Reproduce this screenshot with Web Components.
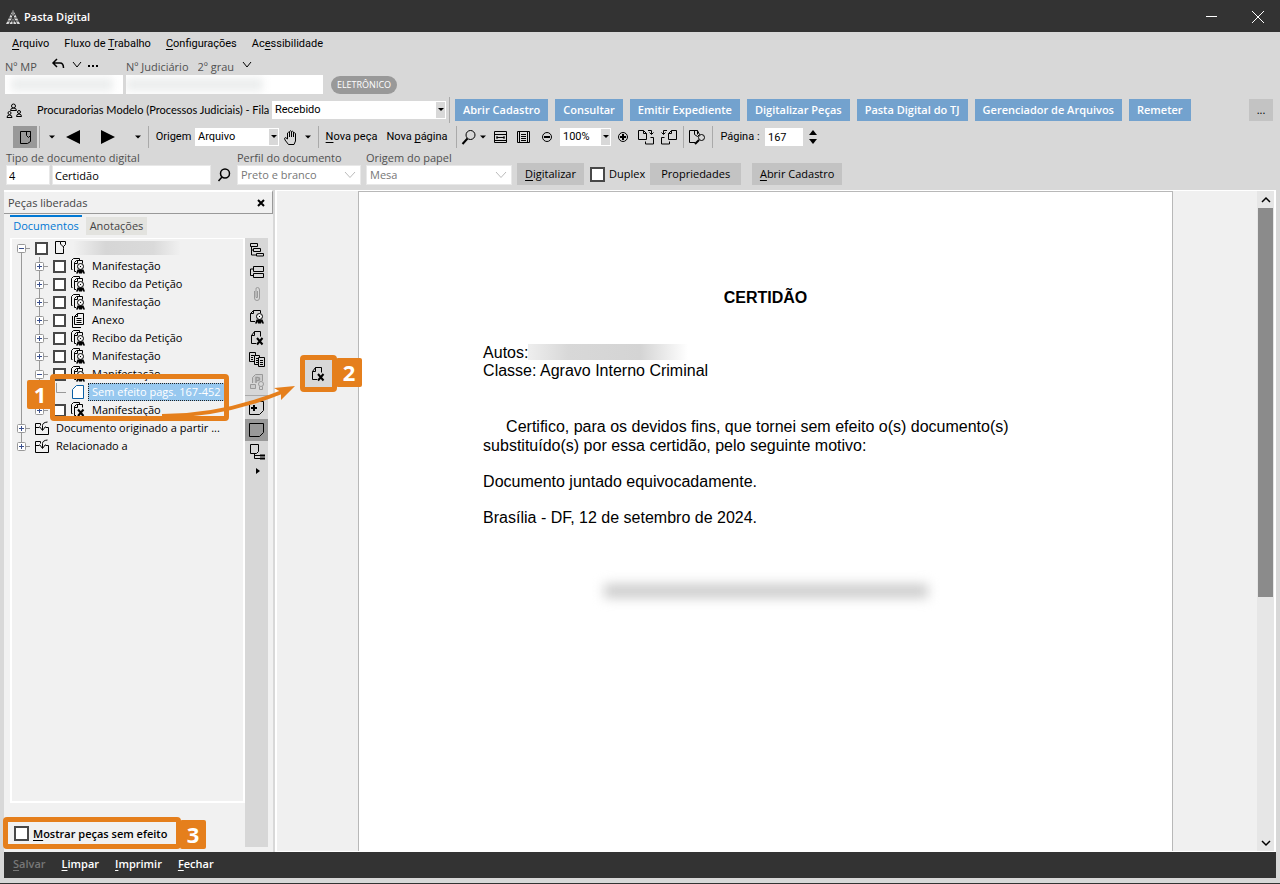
<!DOCTYPE html>
<html lang="pt-BR">
<head>
<meta charset="utf-8">
<title>Pasta Digital</title>
<style>
html, body { margin: 0; height: 100%; }
body { background: #d8d8d8; color: #000; font: 11px/16px "Open Sans", "Noto Sans", sans-serif; }
</style>
</head>
<body>
<app-window></app-window>
<script>
const base = `<style>
*, *::before { box-sizing: border-box; }
button, input, select { font: inherit; color: inherit; border: 0; border-radius: 0; margin: 0; padding: 0; background: none; }
button { white-space: nowrap; }
svg { display: block; flex: none; overflow: visible; }
label, span { white-space: nowrap; }
u { text-underline-offset: 2px; }
input[type=checkbox] { appearance: none; flex: none; width: 15px; height: 15px; border: 2px solid #484848; background: #fff; }
input[type=text] { background: #fff; min-width: 0; }
select { appearance: none; width: 100%; }
</style>`;

const rosette = '<circle cx="10.500" cy="8.500" r="3" fill="#f1f1f1"/><path d="M10 8.500h1"/><path d="M7.500 11.500h6l1.500 4h-2l-1-2v2H9v-2l-1 2H6z" fill="#000" stroke="none"/>';
const pages = '<path d="M6 13.500H4.500V4.500L6.500 2.500h6v3M2.500 11.500h-1v-9L3.500 .500h6v2M7.500 3v2.500H5"/>';
const art = {
  page: '<path d="M3.500 2.500h10v10l-3 2h-7z"/><path d="M9.500 2.500v4l2 2 2-2v-4"/>',
  root: '<path d="M8.500 1.500h5v3l-2 2v2M8.500 1.500v2.500l3 3M8.500 1.500h-5v12h8v-5"/>',
  cert: pages + rosette,
  annex: '<path d="M4.500 4.500l3-3h6v11h-9zM2.500 4v11.500H11M7.500 1.500v3h-3M6.500 6.500h5M6.500 8.500h5M6.500 10.500h5"/>',
  voided: pages + '<path d="M8 7.500l5.500 6.500M13.500 7.500L8 14" stroke-width="2"/>',
  sheet: '<path d="M2.500 5.500l4-4h7v13h-11z" stroke="#0a5fa5" fill="#fff"/>',
  folder: '<path d="M1.500 14.500v-11h5v2M1.500 7.500h4M11.500 7.500h3v7h-13M5.500 6.500l3 4 3-4M8.500 10V5.500q0-3 5-3.500"/>',
  tree: '<path d="M1.500 1.500h7v3h-7zM4.500 6.500h7v3h-7zM7.500 11.500h7v2.500h-7zM2.500 4.500v8.500h5M2.500 8h2"/>',
  split: '<path d="M4.500 2.500h10v5h-10zM4.500 9.500h10v4h-10zM4.500 5h-3v6.500h3"/>',
  clip: '<path d="M5.500 5v7q0 2.500 2.500 2.500t2.500-2.500V4q0-2.500-2-2.500t-1.500 2v8h1.500V5" stroke="#999"/>',
  certPage: '<path d="M6 13.500H1.500V5.500l3-3h7V5M4.500 2.500v3h-3"/>' + rosette,
  voidPage: '<path d="M7 13.500H2.500V5.500l3-4h6v5M5.500 1.500v4h-3"/><path d="M8 8l5.500 6.500M13.500 8L8 14.500" stroke-width="2"/>',
  copies: '<g fill="#d8d8d8"><path d="M.500 .500h6v9h-6z"/><path d="M5.500 3.500h5v9h-5z"/><path d="M9.500 5.500h6v9h-6z"/></g><path d="M2 3.500h3M2 5.500h2M2 7.500h2M7 6.500h2M7 8.500h2M7 10.500h2M11 8.500h3M11 10.500h3M11 12.500h3"/>',
  stamp: '<g stroke="#999"><path d="M3.500 9V3.500l3-3h7V7M1.500 10.500h5v4h-5z" fill="#ccc"/><path d="M7 9V3.500h1.500q2 0 2 1.500t-2 1.500H7" stroke-width="1.500"/><circle cx="12" cy="10" r="2.500" fill="#d8d8d8"/><path d="M10.500 12.500v3h3v-3"/></g>',
  addPage: '<path d="M.500 1.500h14v9l-4 4H.500z"/><path d="M2 8h6M5 5v6" stroke-width="2"/>',
  bigPage: '<path d="M.500 1.500h14v9l-4 4h-10z"/>',
  map: '<path d="M1.500 .500h8v7l-2 2h-6zM5.500 10v4.500H11M5.500 11.500H11"/><path d="M11 11.500h5M11 14.500h5" stroke-width="2"/>',
  org: '<circle cx="7.500" cy="4" r="2"/><path d="M4.500 8.500q0-2.500 3-2.500t3 2.500z"/><circle cx="3.500" cy="11" r="1.500"/><path d="M1 15.500q0-2.500 2.500-2.500T6 15.500z"/><circle cx="13" cy="10" r="1.500"/><path d="M10.500 14.500q0-2.500 2.500-2.500t2.500 2.500z"/>',
  hand: '<path d="M5.500 15.500L2 11Q1 8.500 2.500 8.500L4.500 10V4q1-1.500 2 0v4V2.500q1-1.500 2 0V8 3q1-1.500 2 0v5V4.500q1-1.500 2 0V12l-1.500 3.500z"/>',
  zoom: '<circle cx="9.500" cy="6" r="4.500"/><path d="M6.500 9.500L1.500 15" stroke-width="2"/>',
  find: '<circle cx="9" cy="6.500" r="4.500" stroke-width="1.500"/><path d="M6 10L2.500 14" stroke-width="1.500"/>',
  fitW: '<path d="M2.500 2.500h12v11h-12zM2.500 5.500h12M2.500 11.500h12M4.500 8.500h8M5 7v3M12 7v3"/>',
  fitP: '<path d="M1.500 2.500h12v11h-12zM3.500 2.500v11M11.500 2.500v11M5 5.500h5M5 7.500h5M5 9.500h5M5 11.500h5"/>',
  minus: '<circle cx="8" cy="8" r="4.500"/><path d="M5 8h6" stroke-width="2"/>',
  plus: '<circle cx="8" cy="8" r="4.500"/><path d="M5 8h6M8 5v6" stroke-width="2"/>',
  rotR: '<path d="M.500 1.500h5l3 3v6h-8zM5.500 1.500v3h3M10 1.500h3.500V5M11.500 3.500l2 2 2-2M7.500 12.500v2.500h8V8.500h-3"/>',
  rotL: '<path d="M15.500 1.500h-5l-3 3v6h8zM10.500 1.500v3h-3M6 1.500H2.500V5M.500 3.500l2 2 2-2M8.500 12.500v2.500h-8V8.500h3"/>',
  inspect: '<path d="M6 13.500H.500v-12h8v4M5.500 1.500v4l3 2 2-2-2-4"/><circle cx="12.500" cy="8.500" r="3"/><path d="M10 11l-4 4" stroke-width="2"/>',
  left: '<path d="M15 1v14L1 8z" fill="#000" stroke="none"/>',
  right: '<path d="M1 1v14L15 8z" fill="#000" stroke="none"/>',
  caret: '<path d="M5 6.500h6L8 9.500z" fill="#000" stroke="none"/>',
  caretR: '<path d="M7 5v6l4-3z" fill="#000" stroke="none"/>',
  chev: '<path d="M4 5l4 5 4-5"/>',
  reply: '<path d="M7 2L3 6l4 4M3 6h7q3.500 0 3.500 5" stroke-width="1.500"/>',
  close: '<path d="M5 5l6 6M11 5l-6 6" stroke-width="2"/>',
  up: '<path d="M4 10l4-4 4 4" stroke-width="1.500"/>',
  down: '<path d="M4 6l4 4 4-4" stroke-width="1.500"/>'
};
const icon = (n, w = 16) => `<svg width="${w}" height="16" viewBox="0 0 ${w} 16" fill="none" stroke="#000" aria-hidden="true">${art[n]}</svg>`;

function define(name, html) {
  const t = document.createElement('template');
  t.innerHTML = base + html;
  customElements.define(name, class extends HTMLElement {
    constructor() {
      super();
      this.attachShadow({ mode: 'open' }).append(t.content.cloneNode(true));
    }
  });
}

define('title-bar', `<style>
:host { display: flex; align-items: center; box-sizing: border-box; height: 32px; padding: 2px 10px 0 6px; gap: 4px; background: #333; color: #fff; font-weight: 600; }
h1 { flex: 1; margin: 0; font: inherit; }
button { width: 24px; height: 24px; margin-left: 18px; display: grid; place-items: center; }
</style>
<svg width="14" height="14" viewBox="0 0 14 14"><path d="M7 0L14 14H0z" fill="#ddd"/><path d="M5 4l6 10M9 4L3 14M3 8h8M1 11h12M7 1v13" stroke="#333"/></svg>
<h1>Pasta Digital</h1>
<button aria-label="Minimizar"><svg width="12" height="12"><path d="M0 5.500h11" stroke="#fff"/></svg></button>
<button aria-label="Fechar janela"><svg width="12" height="12"><path d="M0 0l12 12M12 0L0 12" stroke="#fff"/></svg></button>`);

define('menu-bar', `<style>
:host { display: flex; align-items: center; box-sizing: border-box; height: 22px; padding: 1px 0 0 12px; gap: 15px; font: 11px/16px Roboto, sans-serif; }
</style>
<button><u>A</u>rquivo</button><button>Fluxo de <u>T</u>rabalho</button><button><u>C</u>onfigurações</button><button>Ac<u>e</u>ssibilidade</button>`);

define('process-bar', `<style>
:host { display: grid; grid-template-columns: 118px 197px auto; justify-content: start; column-gap: 3px; padding: 4px 0 3px 5px; color: #505050; }
.lab { display: flex; align-items: center; height: 17px; }
.lab button { margin-left: 3px; }
.lab button:first-of-type { margin-left: 13px; }
.field { position: relative; height: 19px; overflow: hidden; }
.field input { width: 100%; height: 100%; display: block; }
.smear { position: absolute; inset: 3px 10px 3px 6px; background: #ebeded; filter: blur(4px); }
.field + .field .smear { right: 60px; left: 0; }
.grade { display: flex; align-items: center; margin-left: 9px; }
.grade select { width: 41px; }
.grade svg, .lab button svg { margin-top: -4px; }
.badge { align-self: center; margin-left: 5px; height: 18px; width: 66px; text-align: center; border-radius: 9px; background: #999; color: #fff; font: 9px/18px "Open Sans", sans-serif; }
</style>
<div class="lab"><label for="mp">Nº MP</label><button aria-label="Voltar">${icon('reply')}</button><button aria-label="Opções">${icon('chev')}</button>
<button aria-label="Mais"><svg width="12" height="16"><path d="M0 9h2m2 0h2m2 0h2" stroke="#000" stroke-width="2"/></svg></button></div>
<div class="lab"><label for="jud">Nº Judiciário</label><span class="grade"><select aria-label="Grau"><option>2º grau</option></select>${icon('chev')}</span></div><i></i>
<div class="field"><input type="text" id="mp"><div class="smear"></div></div>
<div class="field"><input type="text" id="jud"><div class="smear"></div></div>
<span class="badge">ELETRÔNICO</span>`);

define('combo-box', `<style>
:host { display: flex; align-items: center; box-sizing: border-box; position: relative; height: 18px; padding-left: 3px; background: #fff; }
::slotted(select) { opacity: 1; height: 100%; }
div { position: absolute; right: 1px; top: 1px; bottom: 1px; width: 9px; display: grid; place-items: center; background: #d8d8d8; pointer-events: none; }
:host([flat]) { color: #777; height: 20px; border: 1px solid #e8e8e8; }
:host([flat]) div { width: 18px; background: none; }
:host([flat]) .c, :host(:not([flat])) .f { display: none; }
</style>
<slot></slot><div><svg class="c" width="6" height="4"><path d="M0 0h6L3 3z"/></svg><svg class="f" width="12" height="7"><path d="M1 0l5 5.500L11 0" fill="none" stroke="#bbb"/></svg></div>`);

define('queue-bar', `<style>
:host { display: flex; align-items: center; height: 26px; padding: 0 7px 0 6px; font: 11px/16px Roboto, sans-serif; }
label { width: 235px; margin-left: 15px; font-family: Lato, sans-serif; }
combo-box { width: 174px; margin-right: 3px; }
i { width: 1px; height: 26px; background: #aaa; }
nav { display: flex; gap: 7px; margin-left: 5px; flex: 1; font: 600 11px/16px "Open Sans", sans-serif; color: #fff; }
nav button { height: 22px; padding: 0 8px; background: #73a2ce; }
.more { width: 24px; height: 22px; background: #c3c3c3; font: 11px/16px "Open Sans", sans-serif; }
</style>
${icon('org')}<label for="fila">Procuradorias Modelo (Processos Judiciais) - Fila</label>
<combo-box><select id="fila" aria-label="Fila"><option>Recebido</option></select></combo-box><i></i>
<nav><button>Abrir Cadastro</button><button>Consultar</button><button>Emitir Expediente</button><button>Digitalizar Peças</button><button>Pasta Digital do TJ</button><button>Gerenciador de Arquivos</button><button>Remeter</button></nav>
<button class="more" aria-label="Mais ações">...</button>`);

define('tool-bar', `<style>
:host { display: grid; align-items: center; justify-items: center; height: 28px; padding-left: 13px; font: 11px/16px Roboto, sans-serif;
 grid-template-columns: 24px 4px 21px 22px 48px 12px 8px 43px 84px 24px 10px 10px 57px 74px 4px 22px 6px 28px 20px 26px 51px 24px 22px 24px 4px 24px 6px 50px 38px 20px; }
combo-box, input { width: 100%; }
button { display: grid; place-items: center; }
.txt { display: block; }
.on { width: 24px; height: 22px; background: #999; }
i { width: 1px; height: 22px; background: #aaa; }
input[type=text] { height: 18px; padding-left: 3px; }
.spin { display: grid; gap: 4px; }
</style>
<button class="on" aria-label="Painel">${icon('page')}</button><i></i><button aria-label="Histórico">${icon('caret')}</button>
<button aria-label="Anterior">${icon('left')}</button><button aria-label="Próximo">${icon('right')}</button><button aria-label="Opções de navegação">${icon('caret')}</button><i></i>
<label for="org">Origem</label><combo-box><select id="org" aria-label="Origem"><option>Arquivo</option></select></combo-box>
<button aria-label="Mover">${icon('hand')}</button><button aria-label="Opções de mover">${icon('caret')}</button><i></i>
<button class="txt"><u>N</u>ova peça</button><button class="txt">Nova <u>p</u>ágina</button><i></i>
<button aria-label="Lupa">${icon('zoom')}</button><button aria-label="Opções da lupa">${icon('caret')}</button>
<button aria-label="Ajustar à largura">${icon('fitW')}</button><button aria-label="Ajustar à página">${icon('fitP')}</button>
<button aria-label="Reduzir">${icon('minus')}</button><combo-box><select aria-label="Zoom"><option>100%</option></select></combo-box><button aria-label="Ampliar">${icon('plus')}</button>
<button aria-label="Girar à direita">${icon('rotR')}</button><button aria-label="Girar à esquerda">${icon('rotL')}</button><i></i>
<button aria-label="Inspecionar">${icon('inspect')}</button><i></i>
<label for="pg">Página :</label><input type="text" id="pg" value="167">
<span class="spin"><button aria-label="Próxima página"><svg width="8" height="5"><path d="M0 5h8L4 0z"/></svg></button><button aria-label="Página anterior"><svg width="8" height="5"><path d="M0 0h8L4 5z"/></svg></button></span>`);

define('scan-bar', `<style>
:host { display: flex; align-items: flex-end; padding: 0 0 5px 6px; }
.f { display: flex; flex-direction: column; color: #505050; line-height: 14px; }
.f > div { display: flex; gap: 2px; color: #000; }
input[type=text] { height: 20px; padding-left: 2px; border: 1px solid #e8e8e8; }
.find { width: 26px; height: 20px; display: grid; place-items: center; }
.b { height: 22px; background: #c3c3c3; }
.dup { display: flex; align-items: center; gap: 4px; height: 22px; margin: 0 5px 0 6px; }
</style>
<div class="f"><label for="tipo">Tipo de documento digital</label><div><input type="text" id="tipo" value="4" style="width:44px"><input type="text" aria-label="Nome do tipo" value="Certidão" style="width:159px"></div></div>
<button class="find" aria-label="Pesquisar tipo">${icon('find')}</button>
<div class="f" style="width:129px"><label for="perfil">Perfil do documento</label><combo-box flat style="width:124px"><select id="perfil" aria-label="Perfil do documento" disabled><option>Preto e branco</option></select></combo-box></div>
<div class="f" style="width:151px"><label for="papel">Origem do papel</label><combo-box flat style="width:146px"><select id="papel" aria-label="Origem do papel" disabled><option>Mesa</option></select></combo-box></div>
<button class="b" style="width:67px"><u>D</u>igitalizar</button>
<label class="dup"><input type="checkbox">Duplex</label>
<button class="b" style="width:91px">Propriedades</button>
<button class="b" style="width:90px;margin-left:11px"><u>A</u>brir Cadastro</button>`);

const rows = [
  { e: '-', root: 1, ic: 'root', smear: 1 },
  { e: '+', ic: 'cert', t: 'Manifestação' }, { e: '+', ic: 'cert', t: 'Recibo da Petição' },
  { e: '+', ic: 'cert', t: 'Manifestação' }, { e: '+', ic: 'annex', t: 'Anexo' },
  { e: '+', ic: 'cert', t: 'Recibo da Petição' }, { e: '+', ic: 'cert', t: 'Manifestação' },
  { e: '-', ic: 'cert', t: 'Manifestação' }, { sel: 1, ic: 'sheet', t: 'Sem efeito pags. 167-452' },
  { e: '+', ic: 'voided', last: 1, t: 'Manifestação' },
  { e: '+', root: 1, nocheck: 1, ic: 'folder', t: 'Documento originado a partir ...' },
  { e: '+', root: 1, nocheck: 1, end: 1, ic: 'folder', t: 'Relacionado a' }
];
const cell = (e, up, down) => `<svg width="18" height="18" fill="none" stroke="#999"><path d="M9.500 ${up ? 0 : 9}V${down ? 18 : 9}"/>${e ? `<path d="M9 9.500h9"/><rect x="5.500" y="5.500" width="8" height="8" rx="1" fill="#fff"/><path d="M7 9.500h5${e === '+' ? 'M9.500 7v5' : ''}" stroke="#3a4f8c"/>` : ''}</svg>`;
const row = (r, i) => `<li class="${r.sel ? 'sel' : ''} ${r.root ? 'root' : ''}">${
  r.root ? cell(r.e, i, !r.end) : cell('', 1, 1) + cell(r.e, 1, !r.last)}${
  r.nocheck ? '' : r.sel ? '<svg class="k" width="18" height="18" fill="none" stroke="#999"><path d="M8.500 0v9.500H18"/></svg>' : `<span class="k"><input type="checkbox" aria-label="${r.t || 'Processo'}"></span>`}${icon(r.ic)}<span class="t">${r.smear ? '<i></i>' : r.t}</span></li>`;

define('document-tree', `<style>
:host { display: block; border: solid #fff; border-width: 1px 2px 2px; overflow: hidden; }
ul { list-style: none; margin: 0; padding: 0; }
li { display: flex; align-items: center; height: 18px; }
.k { width: 18px; display: flex; justify-content: flex-end; }
input[type=checkbox] { width: 13px; height: 13px; }
.k + svg { margin-left: 4px; }
.root > svg:nth-child(2) { margin-left: 4px; }
.t { margin-left: 6px; }
.sel .t { margin-left: 2px; padding: 0 3px; height: 18px; line-height: 16px; background: #97c8ef; color: #fff; border: 1px dotted #222; }
i { display: block; width: 106px; height: 14px; background: linear-gradient(90deg, #f0f0f0, #d6d6d6 30%, #dadada 75%, #f0f0f0); }
</style><ul>${rows.map(row).join('')}</ul>`);

define('tool-strip', `<style>
:host { display: flex; flex-direction: column; align-items: center; padding-top: 1px; box-sizing: border-box; background: #d7d7d7; }
button { width: 100%; height: 22px; display: grid; place-items: center; }
.on { background: #999; }
hr { width: 100%; margin: 2px 0 1px; border: 0; border-top: 1px solid #aaa; }
.s { height: 12px; overflow: hidden; }
</style>
${[['tree', 'Árvore'], ['split', 'Dividir'], ['clip', 'Anexar'], ['certPage', 'Assinar'], ['voidPage', 'Tornar sem efeito'], ['copies', 'Copiar'], ['stamp', 'Protocolar']].map(([n, l]) => `<button aria-label="${l}">${icon(n)}</button>`).join('')}<hr>
<button aria-label="Nova folha">${icon('addPage')}</button><button class="on" aria-label="Folha">${icon('bigPage')}</button><button aria-label="Mapa">${icon('map')}</button><button class="s" aria-label="Mais">${icon('caretR')}</button>`);

define('side-panel', `<style>
:host { display: flex; flex-direction: column; background: #f1f1f1; }
header { display: flex; align-items: center; justify-content: space-between; height: 24px; padding: 0 3px 0 4px; border: solid #999; border-width: 0 1px 1px 0; border-top: 2px solid #fff; color: #444; }
h2 { margin: 0; font: inherit; }
nav { display: flex; gap: 4px; height: 20px; margin: 1px 0 3px 6px; }
nav button { color: #444; }
nav .a { width: 72px; border-top: 2px solid #0078d4; color: #0078d4; }
nav .b { width: 61px; height: 18px; margin-top: 2px; background: #e3e3df; }
.body { flex: 1; display: flex; min-height: 0; padding: 0 5px 5px 6px; }
.col { flex: 1; min-width: 0; display: flex; flex-direction: column; }
document-tree { flex: 1; }
tool-strip { width: 23px; }
label { display: flex; align-items: center; gap: 4px; height: 44px; padding: 17px 0 0 4px; font-weight: 600; }
</style>
<header><h2>Peças liberadas</h2><button aria-label="Fechar painel">${icon('close')}</button></header>
<nav><button class="a">Documentos</button><button class="b">Anotações</button></nav>
<div class="body"><div class="col"><document-tree></document-tree><label><input type="checkbox"><span><u>M</u>ostrar peças sem efeito</span></label></div><tool-strip></tool-strip></div>`);

define('document-view', `<style>
:host { display: flex; background: #f0f0f0; border: solid #fff; border-width: 1px 2px; }
.area { flex: 1; display: flex; justify-content: center; overflow: hidden; padding-right: 3px; }
article { width: 83.4%; border: 1px solid #b8b8b8; border-bottom: 0; padding: 97px 124px 0; background: #fff; font: 16px/18px "Liberation Sans", Arial, sans-serif; white-space: nowrap; }
h3 { margin: 0 0 37px; font: inherit; font-weight: 700; text-align: center; }
p { margin: 0 0 18px; }
.meta { margin-bottom: 37px; }
.meta div { display: flex; }
.meta i { width: 160px; height: 16px; background: linear-gradient(90deg, #eee, #d8d8d8 25%, #d4d4d4 70%, #fff); }
.in { text-indent: 23px; line-height: 19px; }
.cont { display: block; text-indent: 0; }
.sign { width: 324px; height: 14px; margin: 57px auto 0; background: #ccc; filter: blur(6px); }
.bar { width: 17px; background: #e6e6e6; display: flex; flex-direction: column; align-items: center; padding-top: 1px; }
.bar button { height: 16px; }
.track { flex: 1; width: 15px; }
.thumb { height: 62%; background: #8b8b8b; }
</style>
<div class="area"><article><h3>CERTIDÃO</h3>
<div class="meta"><div>Autos:<i></i></div><div>Classe: Agravo Interno Criminal</div></div>
<p class="in">Certifico, para os devidos fins, que tornei sem efeito o(s) documento(s) <span class="cont">substituído(s) por essa certidão, pelo seguinte motivo:</span></p><p>Documento juntado equivocadamente.</p><p>Brasília - DF, 12 de setembro de 2024.</p><div class="sign"></div></article></div>
<div class="bar"><button aria-label="Rolar para cima">${icon('up')}</button><div class="track"><div class="thumb"></div></div><button aria-label="Rolar para baixo">${icon('down')}</button></div>`);

define('callout-box', `<style>
:host { position: absolute; box-sizing: border-box; border: 5px solid #e57f1c; border-radius: 4px; pointer-events: none; }
b { position: absolute; top: -2px; width: 26px; height: 29px; border-radius: 2px; background: #e57f1c; color: #fff; font: 700 22px/29px "Open Sans", sans-serif; text-align: center; }
:host(:not([before])) b { left: 100%; margin-left: 4px; }
:host([before]) b { right: 100%; margin-right: 2px; top: 1px; }
</style><b><slot></slot></b>`);

define('action-bar', `<style>
:host { display: flex; align-items: center; gap: 16px; box-sizing: border-box; height: 26px; margin: 0 4px; padding: 0 0 2px 9px; background: #333; color: #fff; font-weight: 600; }
button:disabled { color: #777; }
</style><button disabled><u>S</u>alvar</button><button><u>L</u>impar</button><button><u>I</u>mprimir</button><button><u>F</u>echar</button>`);

define('app-window', `<style>
:host { display: flex; flex-direction: column; min-height: 100vh; box-sizing: border-box; border-bottom: 1px solid #333; padding-bottom: 5px; }
main { flex: 1; display: flex; gap: 2px; position: relative; padding: 0 4px; }
side-panel { width: 269px; }
document-view { flex: 1; min-width: 0; }
.arrow { position: absolute; left: 160px; top: 190px; pointer-events: none; }
.one { left: 50px; top: 184px; width: 179px; height: 47px; }
.two { left: 300px; top: 165px; width: 37px; height: 37px; background: #d8d8d8; }
.twoicon { position: absolute; left: 310px; top: 176px; }
.three { left: 3px; bottom: 3px; width: 178px; height: 32px; }
</style>
<title-bar></title-bar><menu-bar></menu-bar><process-bar></process-bar><queue-bar></queue-bar><tool-bar></tool-bar><scan-bar></scan-bar>
<main><side-panel></side-panel><document-view></document-view>
<callout-box class="one" before>1</callout-box><callout-box class="two">2</callout-box><callout-box class="three">3</callout-box>
<div class="twoicon">${icon('voidPage')}</div>
<svg class="arrow" width="136" height="40"><path d="M2 36Q62 36 122 12" fill="none" stroke="#e57f1c" stroke-width="4"/><path d="M135 6L121 20L121 12L114 8z" fill="#e57f1c"/></svg>
</main><action-bar></action-bar>`);
</script>
</body>
</html>
